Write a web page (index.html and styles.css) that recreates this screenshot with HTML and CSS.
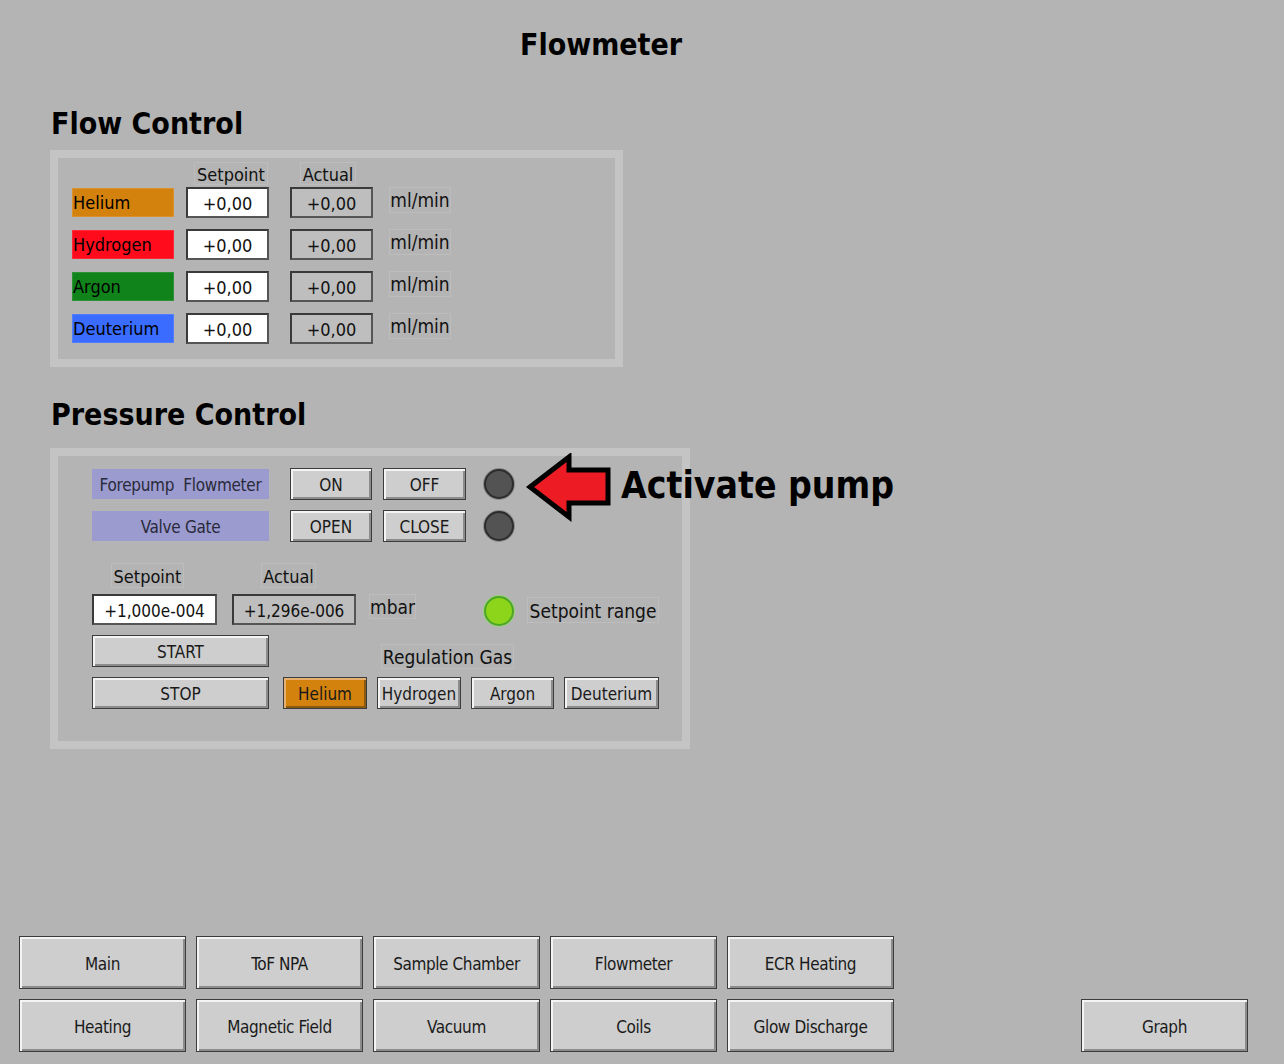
FILE: index.html
```html
<!DOCTYPE html>
<html lang="en">
<head>
<meta charset="utf-8">
<title>Flowmeter</title>
<link rel="stylesheet" href="styles.css">
</head>
<body>
<div class="screen">
  <h1 class="title">Flowmeter</h1>

  <h2 class="section-title flow-title">Flow Control</h2>
  <div class="panel flow-panel">
    <div class="flow-head">
      <span class="lbl hd-sp">Setpoint</span>
      <span class="lbl hd-act">Actual</span>
    </div>
    <div class="flow-rows">
      <div class="flow-row">
        <div class="gas gas-he">Helium</div>
        <div class="num sp">+0,00</div>
        <div class="num act">+0,00</div>
        <div class="lbl unit">ml/min</div>
      </div>
      <div class="flow-row">
        <div class="gas gas-h2">Hydrogen</div>
        <div class="num sp">+0,00</div>
        <div class="num act">+0,00</div>
        <div class="lbl unit">ml/min</div>
      </div>
      <div class="flow-row">
        <div class="gas gas-ar">Argon</div>
        <div class="num sp">+0,00</div>
        <div class="num act">+0,00</div>
        <div class="lbl unit">ml/min</div>
      </div>
      <div class="flow-row">
        <div class="gas gas-d2">Deuterium</div>
        <div class="num sp">+0,00</div>
        <div class="num act">+0,00</div>
        <div class="lbl unit">ml/min</div>
      </div>
    </div>
  </div>

  <h2 class="section-title press-title">Pressure Control</h2>
  <div class="press-wrap">
    <div class="panel press-panel">
      <div class="prow prow-a">
        <div class="tag">Forepump&nbsp; Flowmeter</div>
        <div class="btn sm on">ON</div>
        <div class="btn sm off">OFF</div>
        <div class="led led-off"></div>
      </div>
      <div class="prow prow-b">
        <div class="tag">Valve Gate</div>
        <div class="btn sm on">OPEN</div>
        <div class="btn sm off">CLOSE</div>
        <div class="led led-off"></div>
      </div>
      <div class="prow phead">
        <span class="lbl ph-sp">Setpoint</span>
        <span class="lbl ph-act">Actual</span>
      </div>
      <div class="prow prow-c">
        <div class="num psp">+1,000e-004</div>
        <div class="num pact">+1,296e-006</div>
        <div class="lbl mbar">mbar</div>
        <div class="led led-on"></div>
        <div class="lbl range">Setpoint range</div>
      </div>
      <div class="prow prow-d">
        <div class="btn wide">START</div>
        <div class="lbl reg">Regulation Gas</div>
      </div>
      <div class="prow prow-e">
        <div class="btn wide">STOP</div>
        <div class="btn gasbtn g-he active">Helium</div>
        <div class="btn gasbtn g-h2">Hydrogen</div>
        <div class="btn gasbtn g-ar">Argon</div>
        <div class="btn gasbtn g-d2">Deuterium</div>
      </div>
    </div>
    <div class="annotation">
      <svg class="arrow" width="86" height="70" viewBox="0 0 86 70">
        <path d="M4 34 L43 4 L43 17 L82 17 L82 50 L43 50 L43 64 Z" fill="#ed1c24" stroke="#000" stroke-width="5" stroke-linejoin="miter"/>
      </svg>
      <span class="annot-text">Activate pump</span>
    </div>
  </div>

  <nav class="nav">
    <div class="btn navbtn r1">Main</div>
    <div class="btn navbtn r1">ToF NPA</div>
    <div class="btn navbtn r1">Sample Chamber</div>
    <div class="btn navbtn r1">Flowmeter</div>
    <div class="btn navbtn r1 ecr">ECR Heating</div>
    <div class="btn navbtn r2">Heating</div>
    <div class="btn navbtn r2">Magnetic Field</div>
    <div class="btn navbtn r2">Vacuum</div>
    <div class="btn navbtn r2">Coils</div>
    <div class="btn navbtn r2">Glow Discharge</div>
    <div class="btn navbtn graph">Graph</div>
  </nav>
</div>
</body>
</html>
```

FILE: styles.css
```css
* { box-sizing: border-box; }

html, body {
  margin: 0;
  padding: 0;
  background: #b4b4b4;
}

body {
  font-family: "DejaVu Sans Condensed", "DejaVu Sans", sans-serif;
  font-stretch: condensed;
  color: #111;
}

.screen {
  width: 1284px;
  height: 1064px;
  display: flex;
  flex-direction: column;
  padding-top: 27px;
  padding-bottom: 12px;
}

.title {
  margin: 0 0 0 520px;
  font-size: 30px;
  line-height: 36px;
  font-weight: bold;
  color: #000;
}

.section-title {
  margin: 0 0 0 51px;
  font-size: 30px;
  line-height: 36px;
  font-weight: bold;
  color: #000;
}

.flow-title { margin-top: 43px; }
.press-title { margin-top: 30px; }

.panel {
  border: 8px solid #c4c4c4;
  background: #b4b4b4;
  margin-left: 50px;
}

/* ---------- Flow control ---------- */
.flow-panel {
  margin-top: 8px;
  width: 573px;
  height: 217px;
  padding: 4px 0 0 14px;
}

.lbl {
  display: flex;
  align-items: center;
  justify-content: center;
  border: 1px solid #bdbdbd;
  white-space: nowrap;
  font-size: 18px;
  color: #111;
}

.flow-head {
  display: flex;
  height: 26px;
  align-items: flex-start;
}

.hd-sp { margin-left: 122px; width: 74px; height: 23px; padding-top: 2px; }
.hd-act { margin-left: 32px; width: 56px; height: 23px; padding-top: 2px; }

.flow-rows {
  display: flex;
  flex-direction: column;
  gap: 13px;
}

.flow-row {
  display: flex;
  align-items: center;
  height: 29px;
}

.gas {
  width: 102px;
  height: 29px;
  display: flex;
  align-items: center;
  padding-left: 0;
  font-size: 18px;
  color: #000;
  border: 1px solid rgba(255,255,255,0.12);
}
.gas-he { background: #d4820e; }
.gas-h2 { background: #ff0b1c; }
.gas-ar { background: #10831a; }
.gas-d2 { background: #3a6cff; }

.num {
  display: flex;
  align-items: center;
  justify-content: center;
  height: 31px;
  padding-top: 2px;
  font-size: 18px;
  color: #111;
  border: 2px solid #3a3a3a;
  border-right-color: #555;
  border-bottom-color: #555;
  white-space: nowrap;
}

.sp { margin-left: 12px; width: 83px; background: #fff; }
.act { margin-left: 21px; width: 83px; background: #bebebe; }

.unit {
  margin-left: 16px;
  width: 62px;
  height: 26px;
  align-self: flex-start;
  margin-top: -1px;
  font-size: 19px;
}

/* ---------- Pressure control ---------- */
.press-wrap {
  position: relative;
  margin-top: 15px;
}

.press-panel {
  width: 640px;
  height: 301px;
  padding: 12px 0 0 34px;
}

.prow {
  display: flex;
  align-items: center;
}

.prow-a, .prow-b { height: 32px; }
.prow-b { margin-top: 10px; }

.tag {
  width: 177px;
  height: 30px;
  background: #9b9bcf;
  display: flex;
  align-items: center;
  justify-content: center;
  padding-top: 2px;
  font-size: 17px;
  letter-spacing: -0.3px;
  color: #2a2a3a;
}

.btn {
  display: flex;
  align-items: center;
  justify-content: center;
  background: #cecece;
  border: 1px solid #3c3c3c;
  box-shadow: inset 2px 2px 0 #f4f4f4, inset -2px -2px 0 #8c8c8c;
  padding-top: 2px;
  font-size: 17px;
  color: #1a1a1a;
  white-space: nowrap;
}

.sm { width: 82px; height: 32px; }
.on { margin-left: 21px; }
.off { margin-left: 11px; width: 83px; }

.led {
  width: 30px;
  height: 30px;
  border-radius: 50%;
  flex: none;
}
.led-off {
  margin-left: 18px;
  background: #535353;
  border: 2px solid #2c2c2c;
  box-shadow: 0 0 0 1px #8a8a8a;
}
.led-on {
  background: #8cd51b;
  border: 2px solid #4ea52a;
  box-shadow: 0 0 0 1px #9ad07a;
}

.phead {
  margin-top: 21px;
  height: 25px;
  align-items: stretch;
}
.ph-sp { margin-left: 19px; width: 73px; padding-top: 2px; }
.ph-act { margin-left: 77px; width: 55px; padding-top: 2px; }

.prow-c {
  margin-top: 6px;
  height: 31px;
}
.psp { width: 125px; background: #fff; font-size: 17px; }
.pact { margin-left: 15px; width: 124px; background: #bebebe; font-size: 17px; }
.mbar {
  margin-left: 13px;
  width: 47px;
  height: 25px;
  align-self: flex-start;
  font-size: 19px;
}
.prow-c .led-on { margin-left: 68px; align-self: flex-start; margin-top: 2px; }
.range {
  margin-left: 13px;
  width: 132px;
  height: 26px;
  align-self: flex-start;
  margin-top: 3px;
  padding-top: 1px;
  font-size: 19px;
}

.prow-d {
  margin-top: 10px;
  height: 32px;
  align-items: flex-start;
}
.wide { width: 177px; height: 32px; }
.reg {
  margin-left: 112px;
  margin-top: 9px;
  width: 133px;
  height: 25px;
  padding-top: 1px;
  font-size: 19px;
}

.prow-e {
  margin-top: 10px;
  height: 32px;
}
.gasbtn { height: 32px; }
.g-he { margin-left: 14px; width: 84px; }
.g-h2 { margin-left: 10px; width: 84px; }
.g-ar { margin-left: 10px; width: 83px; }
.g-d2 { margin-left: 10px; width: 95px; }
.gasbtn.active {
  background: #d4820e;
  box-shadow: inset 2px 2px 0 #e6b070, inset -2px -2px 0 #8a5a10;
}

/* ---------- Annotation ---------- */
.annotation {
  position: absolute;
  left: 0;
  top: 0;
}
.arrow {
  position: absolute;
  left: 526px;
  top: 5px;
}
.annot-text {
  position: absolute;
  left: 621px;
  top: 16px;
  font-size: 37px;
  line-height: 44px;
  font-weight: bold;
  color: #000;
  white-space: nowrap;
}

/* ---------- Navigation ---------- */
.nav {
  margin-top: auto;
  margin-left: 19px;
  display: grid;
  grid-template-columns: repeat(7, 167px);
  grid-template-rows: 53px 53px;
  column-gap: 10px;
  row-gap: 10px;
}
.navbtn {
  font-size: 17px;
  letter-spacing: -0.4px;
}
.r1 { grid-row: 1; }
.r2 { grid-row: 2; }
.graph { grid-column: 7; grid-row: 2; }
```
